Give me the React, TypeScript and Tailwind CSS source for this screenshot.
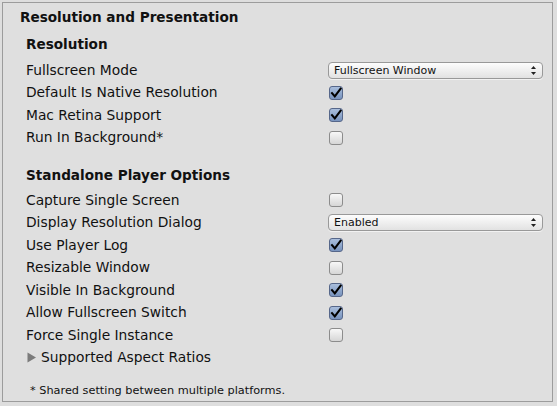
import React from "react";

type Row =
  | { label: string; kind: "check"; checked: boolean }
  | { label: string; kind: "select"; value: string };

const resolutionRows: Row[] = [
  { label: "Fullscreen Mode", kind: "select", value: "Fullscreen Window" },
  { label: "Default Is Native Resolution", kind: "check", checked: true },
  { label: "Mac Retina Support", kind: "check", checked: true },
  { label: "Run In Background*", kind: "check", checked: false },
];

const standaloneRows: Row[] = [
  { label: "Capture Single Screen", kind: "check", checked: false },
  { label: "Display Resolution Dialog", kind: "select", value: "Enabled" },
  { label: "Use Player Log", kind: "check", checked: true },
  { label: "Resizable Window", kind: "check", checked: false },
  { label: "Visible In Background", kind: "check", checked: true },
  { label: "Allow Fullscreen Switch", kind: "check", checked: true },
  { label: "Force Single Instance", kind: "check", checked: false },
];

function Checkbox({ checked }: { checked: boolean }) {
  if (!checked) {
    return (
      <div className="w-[14px] h-[14px] ml-[1px] rounded-[3px] border border-[#8c8c8c] bg-gradient-to-b from-[#f8f8f8] to-[#d6d6d6]" />
    );
  }
  return (
    <div className="relative w-[14px] h-[14px] ml-[1px] rounded-[3px] border border-[#56678a] bg-gradient-to-b from-[#a9bedc] to-[#7893bd]">
      <svg width="14" height="14" viewBox="0 0 14 14" className="absolute -left-[1px] -top-[1px]">
        <path d="M3 7.2 L5.8 10.4 L11.6 2.6" fill="none" stroke="#000" strokeWidth="2.1" strokeLinecap="square" />
      </svg>
    </div>
  );
}

function Select({ value }: { value: string }) {
  return (
    <div className="flex items-center justify-between w-[215px] h-[17px] rounded-[4px] border border-[#999] bg-gradient-to-b from-[#fdfdfd] to-[#e2e2e2] pl-[5px] pr-[6px] text-[11px] text-[#111] shadow-[0_1px_0_rgba(255,255,255,0.6)]">
      <span className="leading-none">{value}</span>
      <svg width="5" height="9" viewBox="0 0 5 9">
        <path d="M2.5 0 L5 3 L0 3 Z" fill="#222" />
        <path d="M0 6 L5 6 L2.5 9 Z" fill="#222" />
      </svg>
    </div>
  );
}

function SettingRow({ row }: { row: Row }) {
  return (
    <div className="flex items-center h-[22.5px]">
      <div className="w-[325px] pl-[23px] text-[13.8px] text-[#111] whitespace-nowrap">{row.label}</div>
      {row.kind === "check" ? <Checkbox checked={row.checked} /> : <Select value={row.value} />}
    </div>
  );
}

export default function App() {
  return (
    <div className="w-[557px] h-[406px] bg-[#dedede] p-[2px] font-['DejaVu_Sans',sans-serif]">
      <div className="w-[551px] h-[400px] border border-[#9c9c9c] bg-[#dfdfdf] flex flex-col">
        {/* header */}
        <div className="h-[29px] flex items-center pl-[17px] text-[13.6px] font-bold text-[#111]">
          Resolution and Presentation
        </div>

        <div className="h-[25px] flex items-center pl-[23px] text-[13.6px] font-bold text-[#111]">Resolution</div>
        <div className="pt-[1.75px]">
          {resolutionRows.map((r) => (
            <SettingRow key={r.label} row={r} />
          ))}
        </div>

        <div className="mt-[14.25px] h-[24px] flex items-center pl-[23px] text-[13.6px] font-bold text-[#111]">
          Standalone Player Options
        </div>
        <div className="pt-[1.75px]">
          {standaloneRows.map((r) => (
            <SettingRow key={r.label} row={r} />
          ))}
          <div className="flex items-center h-[22.5px] pl-[24px] text-[13.8px] text-[#111]">
            <svg width="10" height="11" viewBox="0 0 10 11" className="mr-[4px]">
              <path d="M0.5 0.5 L9 5.5 L0.5 10.5 Z" fill="#7b7b7b" />
            </svg>
            Supported Aspect Ratios
          </div>
        </div>

        <div className="mt-[14.25px] h-[16px] flex items-center pl-[27px] text-[11.3px] text-[#111]">
          * Shared setting between multiple platforms.
        </div>
      </div>
    </div>
  );
}
